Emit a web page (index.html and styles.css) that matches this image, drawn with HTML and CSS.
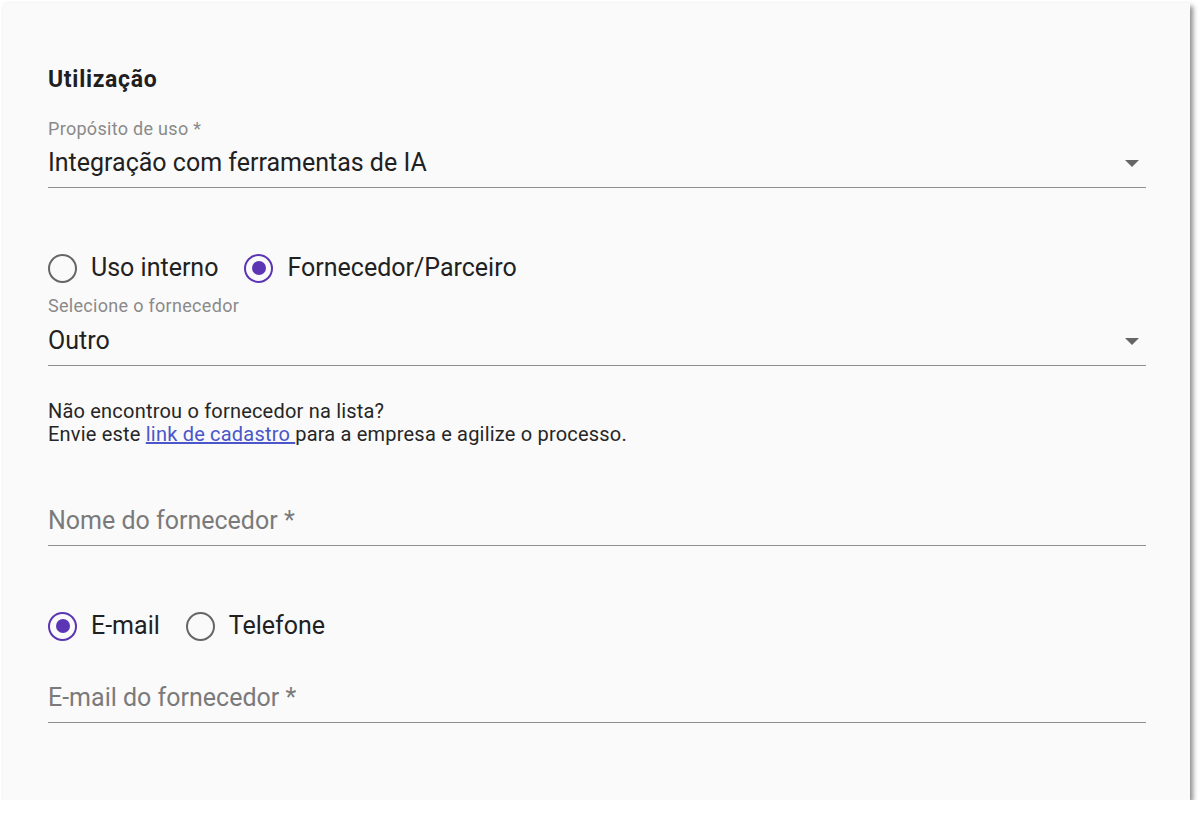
FILE: index.html
```html
<!DOCTYPE html>
<html lang="pt-BR">
<head>
    <meta charset="UTF-8">
    <meta name="viewport" content="width=device-width, initial-scale=1.0">
    <title>Utilização</title>
    <link rel="stylesheet" href="styles.css">
</head>
<body>
    <main class="card">
        <h2 class="section-title">Utilização</h2>

        <div class="field field-purpose">
            <label class="field-label">Propósito de uso *</label>
            <div class="field-control">
                <span class="field-value">Integração com ferramentas de IA</span>
                <span class="select-arrow"></span>
            </div>
        </div>

        <div class="radio-group radio-origin">
            <label class="radio">
                <span class="radio-circle"></span>
                <span class="radio-text">Uso interno</span>
            </label>
            <label class="radio checked">
                <span class="radio-circle"></span>
                <span class="radio-text">Fornecedor/Parceiro</span>
            </label>
        </div>

        <div class="field field-supplier">
            <label class="field-label">Selecione o fornecedor</label>
            <div class="field-control">
                <span class="field-value">Outro</span>
                <span class="select-arrow"></span>
            </div>
        </div>

        <p class="help-text">
            Não encontrou o fornecedor na lista?<br>
            Envie este <a href="#">link de cadastro </a>para a empresa e agilize o processo.
        </p>

        <div class="field field-name">
            <div class="field-control">
                <span class="field-placeholder">Nome do fornecedor *</span>
            </div>
        </div>

        <div class="radio-group radio-contact">
            <label class="radio checked">
                <span class="radio-circle"></span>
                <span class="radio-text">E-mail</span>
            </label>
            <label class="radio">
                <span class="radio-circle"></span>
                <span class="radio-text">Telefone</span>
            </label>
        </div>

        <div class="field field-email">
            <div class="field-control">
                <span class="field-placeholder">E-mail do fornecedor *</span>
            </div>
        </div>
    </main>
</body>
</html>
```

FILE: styles.css
```css
body {
    margin: 0;
    padding: 0;
    background-color: #ffffff;
    font-family: Roboto, 'Liberation Sans', Arial, sans-serif;
    color: #212121;
}

.card {
    box-sizing: border-box;
    width: 1187px;
    height: 797px;
    margin: 3px 0 0 3px;
    padding: 65px 44px 0 45px;
    background-color: #fafafa;
    box-shadow: 3px 3px 5px rgba(0, 0, 0, 0.45);
}

.section-title {
    margin: 0;
    font-size: 23px;
    font-weight: 700;
    line-height: 24px;
    letter-spacing: 0.7px;
    color: #1f1f1f;
}

.field-label {
    display: block;
    font-size: 18px;
    line-height: 20px;
    letter-spacing: 0.3px;
    color: #8a8a8a;
}

.field-control {
    display: flex;
    align-items: center;
    justify-content: space-between;
    padding-bottom: 10px;
    border-bottom: 1px solid #8f8f8f;
}

.field-value,
.field-placeholder {
    font-size: 25px;
    line-height: 28px;
}

.field-value {
    color: #212121;
}

.field-placeholder {
    color: #7a7a7a;
}

.select-arrow {
    width: 0;
    height: 0;
    margin-right: 7px;
    border-left: 7px solid transparent;
    border-right: 7px solid transparent;
    border-top: 7px solid #666666;
}

.field-purpose {
    margin-top: 27px;
}

.field-purpose .field-control {
    margin-top: 10px;
}

.field-supplier {
    margin-top: 14px;
}

.field-supplier .field-control {
    margin-top: 11px;
}

.field-name {
    margin-top: 61px;
}

.field-email {
    margin-top: 44px;
}

.radio-group {
    display: flex;
    align-items: center;
    gap: 26px;
    height: 28px;
}

.radio-origin {
    margin-top: 66px;
}

.radio-contact {
    margin-top: 66px;
}

.radio {
    display: flex;
    align-items: center;
    gap: 14px;
}

.radio-circle {
    box-sizing: border-box;
    width: 29px;
    height: 29px;
    border: 2.5px solid #666666;
    border-radius: 50%;
    display: flex;
    align-items: center;
    justify-content: center;
}

.radio.checked .radio-circle {
    border-color: #5b35b3;
}

.radio.checked .radio-circle::after {
    content: "";
    width: 14px;
    height: 14px;
    border-radius: 50%;
    background-color: #5b35b3;
}

.radio-text {
    font-size: 25px;
    line-height: 28px;
    color: #212121;
}

.help-text {
    margin: 34px 0 0 0;
    font-size: 20px;
    line-height: 23px;
    letter-spacing: 0.2px;
    color: #262626;
}

.help-text a {
    color: #4a56c9;
    text-decoration: underline;
}
```
